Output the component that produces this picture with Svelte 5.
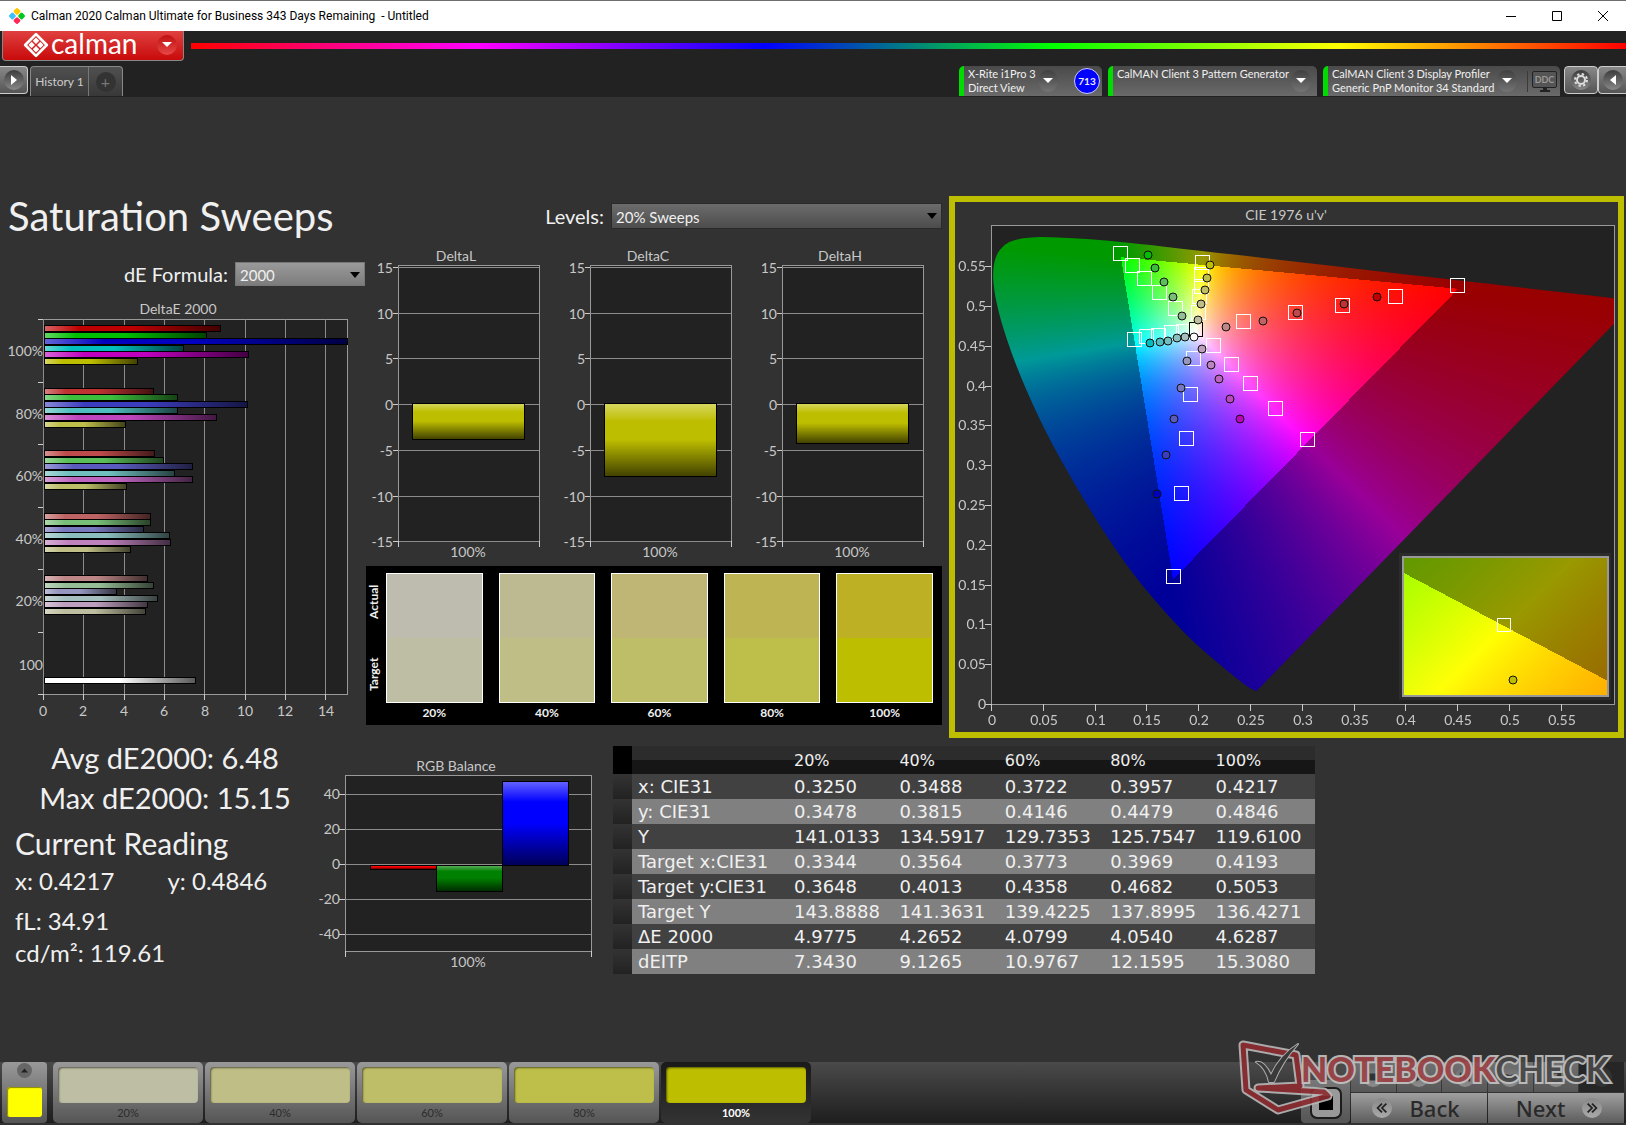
<script>
  import { onMount } from 'svelte';

  let formula = $state('2000');
  let level = $state('20% Sweeps');
  let active = $state(4);
  let gamutEl = $state(null);
  let insetEl = $state(null);

  const steps = ['20%', '40%', '60%', '80%', '100%'];

  // bar colours per saturation step: R, G, B, C, M, Y
  const groups = [
    { label: '100%', ends: [220, 206, 347, 183, 248, 137], colors: ['#be0000', '#00be00', '#0000be', '#00bebe', '#be00be', '#bebe00'] },
    { label: '80%', ends: [153, 177, 247, 177, 216, 125], colors: ['#be3232', '#3cbe3c', '#3c3cbe', '#50bebe', '#be46be', '#bebe4a'] },
    { label: '60%', ends: [154, 163, 192, 174, 192, 126], colors: ['#be4b4b', '#5abe5a', '#5a5abe', '#70bebe', '#be64be', '#bebe68'] },
    { label: '40%', ends: [150, 150, 143, 169, 170, 130], colors: ['#be6464', '#78be78', '#7878be', '#8cbebe', '#be82be', '#bebe86'] },
    { label: '20%', ends: [147, 153, 116, 157, 147, 145], colors: ['#be8787', '#96be96', '#9696be', '#a5bebe', '#bea0be', '#bebea0'] }
  ];

  const deltas = [
    { name: 'DeltaL', height: 36 },
    { name: 'DeltaC', height: 73 },
    { name: 'DeltaH', height: 40 }
  ];
  const deltaTicks = [15, 10, 5, 0, -5, -10, -15];

  const rgbTicks = [40, 20, 0, -20, -40];
  const rgbBars = [
    { x: 60, y: 119, h: 4, color: '#ff0000' },
    { x: 126, y: 119, h: 26, color: '#008000' },
    { x: 192, y: 35, h: 84, color: '#0000ff' }
  ];

  const patches = [
    { actual: '#bebcae', target: '#bebea4' },
    { actual: '#bdb990', target: '#bfbe86' },
    { actual: '#bfb676', target: '#bebe69' },
    { actual: '#beb454', target: '#bebf4a' },
    { actual: '#bdb025', target: '#bebe00' }
  ];

  const rows = [
    ['x: CIE31', '0.3250', '0.3488', '0.3722', '0.3957', '0.4217'],
    ['y: CIE31', '0.3478', '0.3815', '0.4146', '0.4479', '0.4846'],
    ['Y', '141.0133', '134.5917', '129.7353', '125.7547', '119.6100'],
    ['Target x:CIE31', '0.3344', '0.3564', '0.3773', '0.3969', '0.4193'],
    ['Target y:CIE31', '0.3648', '0.4013', '0.4358', '0.4682', '0.5053'],
    ['Target Y', '143.8888', '141.3631', '139.4225', '137.8995', '136.4271'],
    ['ΔE 2000', '4.9775', '4.2652', '4.0799', '4.0540', '4.6287'],
    ['dEITP', '7.3430', '9.1265', '10.9767', '12.1595', '15.3080']
  ];

  // CIE plot, positions inside the 623 x 479 plot area
  const targets = [
    [252, 97], [304, 88], [351, 81], [404, 72], [466, 61],
    [184, 84], [168, 68], [153, 54], [141, 41], [129, 29],
    [202, 134], [199, 170], [195, 214], [190, 269], [182, 352],
    [192, 107], [180, 108], [167, 111], [155, 112], [143, 115],
    [222, 121], [240, 140], [259, 159], [284, 184], [316, 215],
    [207, 88], [208, 72], [210, 62], [210, 50], [211, 38]
  ];
  const measured = [
    [[235, 103], [272, 97], [306, 89], [353, 80], [386, 73]],
    [[191, 92], [182, 73], [173, 58], [164, 44], [157, 31]],
    [[196, 137], [190, 164], [183, 195], [175, 231], [166, 270]],
    [[194, 113], [186, 114], [177, 117], [169, 118], [159, 119]],
    [[211, 125], [220, 141], [228, 155], [239, 175], [249, 195]],
    [[207, 96], [210, 80], [214, 66], [216, 54], [219, 41]]
  ];
  const uTicks = ['0', '0.05', '0.1', '0.15', '0.2', '0.25', '0.3', '0.35', '0.4', '0.45', '0.5', '0.55'];

  const locus = [
    [0.1741, 0.005], [0.1714, 0.0051], [0.1644, 0.0109], [0.1566, 0.0177], [0.144, 0.0297],
    [0.1241, 0.0578], [0.1096, 0.0868], [0.0913, 0.1327], [0.0687, 0.2007], [0.0454, 0.295],
    [0.0235, 0.4127], [0.0082, 0.5384], [0.0039, 0.6548], [0.0139, 0.7502], [0.0389, 0.812],
    [0.0743, 0.8338], [0.1142, 0.8262], [0.1547, 0.8059], [0.2296, 0.7543], [0.3016, 0.6923],
    [0.3731, 0.6245], [0.4441, 0.5547], [0.5125, 0.4866], [0.5752, 0.4242], [0.627, 0.3725],
    [0.6658, 0.334], [0.6915, 0.3083], [0.719, 0.2809], [0.7347, 0.2653]
  ];

  // linear sRGB mix, dimmed outside of the gamut triangle
  function uvColor(u, v) {
    const X = (9 * u) / (4 * v);
    const Z = (12 - 3 * u - 20 * v) / (4 * v);
    const rgb = [
      3.2406 * X - 1.5372 - 0.4986 * Z,
      -0.9689 * X + 1.8758 + 0.0415 * Z,
      0.0557 * X - 0.204 + 1.057 * Z
    ];
    const max = Math.max(...rgb);
    const scale = Math.min(...rgb) < 0 ? 153 : 255;
    return rgb.map((c) => (scale * Math.max(0, c)) / max);
  }

  function shade(canvas, toUv) {
    const { width, height } = canvas;
    const image = new ImageData(width, height);
    for (let y = 0; y < height; y++) {
      for (let x = 0; x < width; x++) {
        const [r, g, b] = uvColor(...toUv(x, y));
        image.data.set([r, g, b, 255], (y * width + x) * 4);
      }
    }
    canvas.getContext('2d').putImageData(image, 0, 0);
  }

  onMount(() => {
    const full = document.createElement('canvas');
    full.width = gamutEl.width;
    full.height = gamutEl.height;
    shade(full, (x, y) => [x / 1035, (479.5 - y) / 796]);

    const pts = locus.map(([x, y]) => {
      const d = -2 * x + 12 * y + 3;
      return [((4 * x) / d) * 1035, 479 - ((9 * y) / d) * 796];
    });
    const ctx = gamutEl.getContext('2d');
    ctx.beginPath();
    ctx.moveTo(...pts[0]);
    for (let i = 1; i < pts.length - 1; i++) {
      const [x, y] = pts[i];
      const [nx, ny] = pts[i + 1];
      ctx.quadraticCurveTo(x, y, (x + nx) / 2, (y + ny) / 2);
    }
    ctx.lineTo(...pts[pts.length - 1]);
    ctx.closePath();
    ctx.clip();
    ctx.drawImage(full, 0, 0);

    // close-up around the yellow target
    shade(insetEl, (x, y) => [0.2039 + (x - 102 + y - 70) / 7000, 0.5529 - (y - 70) / 20000 - (x - 102) / 1e7]);
  });
</script>

<div class="window">
  <div class="titlebar">
    <svg class="app-icon" viewBox="0 0 16 16" aria-hidden="true">
      <rect x="5.2" y="0.6" width="5.6" height="5.6" rx="1.500" fill="#ffc800" transform="rotate(45 8 3.4)" />
      <rect x="0.6" y="5.2" width="5.6" height="5.6" rx="1.500" fill="#3cc0ff" transform="rotate(45 3.4 8)" />
      <rect x="9.8" y="5.2" width="5.6" height="5.6" rx="1.500" fill="#00c81e" transform="rotate(45 12.6 8)" />
      <rect x="5.2" y="9.8" width="5.6" height="5.6" rx="1.500" fill="#ff285a" transform="rotate(45 8 12.6)" />
    </svg>
    <span class="caption">Calman 2020 Calman Ultimate for Business 343 Days Remaining&nbsp; - Untitled</span>
    <button class="win-btn" aria-label="Minimize"><svg viewBox="0 0 12 12"><path d="M1 6.5h10" /></svg></button>
    <button class="win-btn" aria-label="Maximize"><svg viewBox="0 0 12 12"><path d="M1.500 1.500h9v9h-9z" /></svg></button>
    <button class="win-btn" aria-label="Close"><svg viewBox="0 0 12 12"><path d="M1 1l10 10M11 1L1 11" /></svg></button>
  </div>

  <header>
    <div class="brand-row">
      <button class="brand">
        <svg viewBox="0 0 24 24" aria-hidden="true">
          <path d="M12 2L22 12L12 22L2 12Z" fill="none" stroke="#fff" stroke-width="2.500" stroke-linejoin="round" />
          <path d="M12 5l3 3-3 3-3-3zM8 9l3 3-3 3-3-3zM16 9l3 3-3 3-3-3zM12 13l3 3-3 3-3-3z" fill="#fff" />
        </svg>
        <span>calman</span>
        <i class="round red"><svg viewBox="0 0 10 6"><path d="M0 0h10l-5 5z" /></svg></i>
      </button>
      <div class="spectrum"></div>
    </div>
    <div class="tool-row">
      <button class="square left" aria-label="Expand"><i class="round"><svg class="side" viewBox="0 0 6 10"><path d="M0 0v10l6-5z" /></svg></i></button>
      <div class="tabs">
        <button class="tab">History 1</button>
        <button class="tab add" aria-label="Add"><i class="round dim">+</i></button>
      </div>
      <div class="spacer"></div>
      <div class="device meter">
        <span>X-Rite i1Pro 3<br />Direct View</span>
        <button class="round oval" aria-label="Meter menu"><svg viewBox="0 0 10 6"><path d="M0 0h10l-5 5z" /></svg></button>
        <b class="badge">713</b>
      </div>
      <div class="device source">
        <span>CalMAN Client 3 Pattern Generator</span>
        <button class="round oval" aria-label="Source menu"><svg viewBox="0 0 10 6"><path d="M0 0h10l-5 5z" /></svg></button>
      </div>
      <div class="device display">
        <span>CalMAN Client 3 Display Profiler<br />Generic PnP Monitor 34 Standard</span>
        <button class="round oval" aria-label="Display menu"><svg viewBox="0 0 10 6"><path d="M0 0h10l-5 5z" /></svg></button>
        <div class="ddc">
          <b>DDC</b>
          <svg viewBox="0 0 12 4" aria-hidden="true"><path d="M4 0h4v2h3v2H1V2h3z" /></svg>
        </div>
      </div>
      <button class="square gear" aria-label="Settings">
        <i class="round">
          <svg class="cog" viewBox="0 0 16 16">
            <circle cx="8" cy="8" r="4" fill="none" stroke="#ddd" stroke-width="2" />
            <circle cx="8" cy="8" r="6" fill="none" stroke="#ddd" stroke-width="2" stroke-dasharray="2.360 2.350" />
          </svg>
        </i>
      </button>
      <button class="square right" aria-label="Collapse"><i class="round"><svg class="side" viewBox="0 0 6 10"><path d="M6 0v10L0 5z" /></svg></i></button>
    </div>
  </header>

  <main>
    <section class="top">
      <div class="col">
        <h1>Saturation Sweeps</h1>
        <div class="field formula">
          <label for="formula">dE Formula:</label>
          <span class="select light">
            <select id="formula" bind:value={formula}><option>2000</option><option>1994</option></select>
          </span>
        </div>
        <svg class="chart de" viewBox="0 0 365 430">
          <defs>
            <linearGradient id="glossX">
              <stop offset="0" stop-color="#fff" stop-opacity="0.4" />
              <stop offset="0.2" stop-color="#fff" stop-opacity="0" />
              <stop offset="0.5" stop-color="#000" stop-opacity="0" />
              <stop offset="1" stop-color="#000" stop-opacity="0.65" />
            </linearGradient>
            <linearGradient id="glossY" x2="0" y2="1">
              <stop offset="0" stop-color="#fff" stop-opacity="0.4" />
              <stop offset="0.25" stop-color="#fff" stop-opacity="0" />
              <stop offset="0.5" stop-color="#000" stop-opacity="0" />
              <stop offset="1" stop-color="#000" stop-opacity="0.65" />
            </linearGradient>
          </defs>
          <text x="178" y="16" class="mid">DeltaE 2000</text>
          <rect x="43" y="21" width="304" height="375" class="plot" />
          {#each [0, 2, 4, 6, 8, 10, 12, 14] as t, i}
            <path d="M{43 + Math.round(i * 40.3)} 21v375" class="grid" />
            <path d="M{43 + Math.round(i * 40.3)} 396v6" class="tick" />
            <text x={43 + Math.round(i * 40.4)} y="418" class="mid">{t}</text>
          {/each}
          {#each [21, 84, 146, 209, 271, 334, 396] as y}
            <path d="M38 {y}h5" class="tick" />
          {/each}
          {#each groups as g, gi}
            <text x="43" y={58 + Math.round(gi * 62.5)} class="end">{g.label}</text>
            {#each g.ends as end, i}
              {@const y = 27 + Math.round(gi * 62.5 + i * 6.6)}
              <rect x="44" {y} width={end - 44} height="6" fill={g.colors[i]} />
              <rect x="44" {y} width={end - 44} height="6" class="bar" fill="url(#glossX)" />
            {/each}
          {/each}
          <text x="43" y="372" class="end">100</text>
          <rect x="44" y="379" width="151" height="6" fill="#fff" />
          <rect x="44" y="379" width="151" height="6" class="bar" fill="url(#glossX)" />
        </svg>
      </div>

      <div class="col">
        <div class="field levels">
          <label for="levels">Levels:</label>
          <span class="select">
            <select id="levels" bind:value={level}><option>20% Sweeps</option><option>25% Sweeps</option></select>
          </span>
        </div>
        <div class="deltas">
          {#each deltas as d}
            <svg class="chart" viewBox="0 0 192 320">
              <text x="90" y="21" class="mid">{d.name}</text>
              <rect x="32" y="25" width="141" height="276" class="plot" />
              {#each deltaTicks as t, i}
                <path d="M32 {27 + Math.round(i * 45.7)}h141" class="grid" />
                <path d="M27 {27 + Math.round(i * 45.7)}h5" class="tick" />
                <text x="27" y={33 + Math.round(i * 45.7)} class="end">{t}</text>
              {/each}
              <path d="M32 301v6M173 301v6" class="tick" />
              <rect x="46" y="163" width="112" height={d.height} fill="#bebe00" />
              <rect x="46" y="163" width="112" height={d.height} class="bar" fill="url(#glossY)" />
              <text x="102" y="317" class="mid">100%</text>
            </svg>
          {/each}
        </div>
        <div class="patches">
          <div class="side-labels"><span>Target</span><span>Actual</span></div>
          {#each patches as p, i}
            <figure>
              <div class="patch">
                <div style="background: {p.actual}"></div>
                <div style="background: {p.target}"></div>
              </div>
              <figcaption>{steps[i]}</figcaption>
            </figure>
          {/each}
        </div>
      </div>

      <div class="cie">
        <svg class="chart" viewBox="0 1 663 530">
          <text x="331" y="19" class="mid">CIE 1976 u'v'</text>
          <rect x="36" y="24" width="623" height="479" class="plot" />
          <foreignObject x="36" y="24" width="623" height="479">
            <canvas bind:this={gamutEl} width="623" height="479"></canvas>
          </foreignObject>
          <rect x="36" y="24" width="623" height="479" class="frame" />
          {#each uTicks as t, i}
            <path d="M{36 + Math.round(i * 51.8)} 503v7" class="tick" />
            <text x={37 + Math.round(i * 51.8)} y="524" class="mid">{t}</text>
            <path d="M30 {503 - Math.round(i * 39.8)}h6" class="tick" />
            <text x="31" y={508 - Math.round(i * 39.8)} class="end">{t}</text>
          {/each}
          <g transform="translate(36 23)">
            {#each targets as [x, y]}
              <rect x={x - 7} y={y - 7} width="14" height="14" class="target" />
            {/each}
            <rect x="198" y="98" width="13" height="14" class="target white-point" />
            {#each measured as series, s}
              {#each series as [x, y], i}
                <circle cx={x} cy={y} r="4" fill={groups[4 - i].colors[s]} class="reading" />
              {/each}
            {/each}
            <circle cx="203" cy="113" r="4" fill="#fff" class="reading" />
          </g>
          <rect x="444" y="352" width="212" height="147" fill="#2c2c2c" />
          <foreignObject x="447" y="355" width="206" height="140">
            <canvas bind:this={insetEl} width="206" height="140"></canvas>
          </foreignObject>
          <rect x="448" y="356" width="205" height="139" class="frame inset" />
          <rect x="542" y="417" width="13" height="13" class="target" />
          <circle cx="558" cy="479" r="4" fill="#bebe00" class="reading" />
        </svg>
      </div>
    </section>

    <section class="bottom">
      <div class="readings">
        <p class="big center">Avg dE2000: 6.48</p>
        <p class="big center">Max dE2000: 15.15</p>
        <h2>Current Reading</h2>
        <p class="pair"><span>x: 0.4217</span><span>y: 0.4846</span></p>
        <p>fL: 34.91</p>
        <p>cd/m²: 119.61</p>
      </div>

      <svg class="chart rgb" viewBox="0 0 303 226">
        <text x="146" y="25" class="mid">RGB Balance</text>
        <rect x="35" y="29" width="246" height="176" class="plot" />
        {#each rgbTicks as t, i}
          <path d="M35 {48 + i * 35}h246" class="grid" />
          <path d="M29 {48 + i * 35}h6" class="tick" />
          <text x="30" y={53 + i * 35} class="end">{t}</text>
        {/each}
        <path d="M35 205v6M281 205v6" class="tick" />
        {#each rgbBars as b}
          <rect x={b.x} y={b.y} width="66" height={b.h} fill={b.color} />
          <rect x={b.x} y={b.y} width="66" height={b.h} class="bar" fill="url(#glossY)" />
        {/each}
        <text x="158" y="221" class="mid">100%</text>
      </svg>

      <table>
        <thead>
          <tr>
            <th class="handle"></th>
            <th class="name"></th>
            {#each steps as s}<th>{s}</th>{/each}
          </tr>
        </thead>
        <tbody>
          {#each rows as row}
            <tr>
              <td class="handle"></td>
              {#each row as cell}<td>{cell}</td>{/each}
            </tr>
          {/each}
        </tbody>
      </table>
    </section>
  </main>

  <footer>
    <button class="picker" aria-label="Pattern">
      <i class="round up"><svg viewBox="0 0 10 6"><path d="M0 6h10l-5-6z" /></svg></i>
      <span></span>
    </button>
    <div class="levels-bar">
      {#each steps as s, i}
        <button class="level" class:active={i === active} onclick={() => (active = i)}>
          <span style="background: {patches[i].target}"></span>{s}
        </button>
      {/each}
    </div>
    <div class="spacer"></div>
    <button class="stop" aria-label="Stop"><span></span></button>
    <div class="controls">
      <div class="transport">
        <button aria-label="Stop reading"><i class="disc"><svg viewBox="0 0 16 16"><path d="M4 4h8v8H4z" /></svg></i></button>
        <button aria-label="Play"><i class="disc"><svg viewBox="0 0 16 16"><path d="M5 3l8 5-8 5z" /></svg></i></button>
        <button aria-label="Step"><i class="disc"><svg viewBox="0 0 16 16"><path d="M2 3h2v10H2zM12 3h2v10h-2zM5 4l5 4-5 4z" /></svg></i></button>
        <button aria-label="Continuous"><i class="disc"><svg viewBox="0 0 16 16"><path d="M8 8c-2-3-6-3-6 0s4 3 6 0 6-3 6 0-4 3-6 0z" fill="none" stroke="#333" stroke-width="2" /></svg></i></button>
        <button aria-label="Refresh"><i class="disc"><svg viewBox="0 0 16 16"><path d="M12 5a5 5 0 1 0 1 4M13 2v4H9" fill="none" stroke="#333" stroke-width="2" /></svg></i></button>
        <button class="off" aria-label="Record"><i class="disc"></i></button>
      </div>
      <div class="nav">
        <button><i class="disc"><svg viewBox="0 0 16 16"><path d="M8 3L3 8l5 5M13 3L8 8l5 5" /></svg></i><span>Back</span></button>
        <button><span>Next</span><i class="disc"><svg viewBox="0 0 16 16"><path d="M3 3l5 5-5 5M8 3l5 5-5 5" /></svg></i></button>
      </div>
    </div>
    <svg class="watermark" viewBox="0 0 388 80" aria-hidden="true">
      <g fill="none" stroke-linejoin="round" stroke-linecap="round">
        <path d="M7 9L60 19L64 50L22 52L88 56L92 60L42 74L10 54Z" stroke="#b9b9b9" stroke-width="9" />
        <path d="M7 9L60 19L64 50L22 52L88 56L92 60L42 74L10 54Z" stroke="#8e2c30" stroke-width="5" />
        <path d="M20 26q8-2 15 13Q44 19 62 8Q46 26 38 46h-5Q30 32 20 26z" fill="#3a3a3a" stroke="#b9b9b9" stroke-width="2" />
      </g>
      <text x="65" y="46"><tspan class="note">NOTEBOOK</tspan><tspan class="check">CHECK</tspan></text>
    </svg>
  </footer>
</div>

<style>
  :global(body) { margin: 0; background: #323232; }
  .window {
    display: flex;
    flex-direction: column;
    min-height: 100vh;
    box-sizing: border-box;
    border-top: 1px solid #6e6e6e;
    padding-bottom: 2px;
    background: #323232;
    color: #f0f0f0;
    font-family: Lato, "Liberation Sans", sans-serif;
  }
  button { border: 0; padding: 0; font: inherit; color: inherit; background: none; cursor: pointer; }
  h1, h2, p, figure { margin: 0; font-weight: 400; }
  .spacer { flex: 1; }

  .titlebar { display: flex; align-items: center; height: 30px; background: #fff; color: #000; font: 12px/30px Roboto, sans-serif; }
  .app-icon { width: 16px; height: 16px; margin: 0 6px 0 9px; }
  .caption { flex: 1; white-space: pre; }
  .win-btn { width: 46px; height: 30px; display: flex; align-items: center; justify-content: center; }
  .win-btn svg { width: 12px; height: 12px; fill: none; stroke: #000; stroke-width: 1; }

  header { height: 66px; background: #222; display: flex; flex-direction: column; }
  .brand-row { display: flex; height: 30px; }
  .brand {
    width: 182px;
    margin-left: 2px;
    box-sizing: border-box;
    display: flex;
    align-items: flex-start;
    padding: 0 6px 0 20px;
    background: linear-gradient(#e04040, #c80a0a);
    border: 1px solid #888;
    border-top: 0;
    border-radius: 0 0 4px 4px;
    color: #fff;
  }
  .brand > svg { width: 26px; height: 26px; margin: 1px 2px 0 0; }
  .brand span { flex: 1; text-align: left; font-size: 28px; line-height: 24px; }
  .brand .round { margin-top: 4px; }
  .spectrum {
    flex: 1;
    height: 6px;
    margin: 12px 0 0 7px;
    background: linear-gradient(90deg, #f00, #f0f 20%, #00f 40%, #0f0 60%, #ff0 80%, #f00);
  }
  .round {
    display: flex;
    align-items: center;
    justify-content: center;
    flex: none;
    width: 20px;
    height: 20px;
    border-radius: 50%;
    background: linear-gradient(#3c3c3c, #888);
    font-style: normal;
  }
  .round svg { width: 10px; height: 6px; fill: #fff; }
  .round .side { width: 6px; height: 10px; }
  .round .cog { width: 16px; height: 16px; }
  .red { background: linear-gradient(#c01010, #e64848); }
  .dim { background: #333; color: #777; font-size: 16px; }
  .oval { height: 22px; background: linear-gradient(#404040, #747474); }

  .tool-row { display: flex; height: 31px; margin-top: 5px; align-items: flex-start; }
  .square {
    display: flex;
    align-items: center;
    justify-content: center;
    width: 34px;
    height: 28px;
    box-sizing: border-box;
    border: 1px solid #ccc;
    border-radius: 4px;
    background: linear-gradient(#888, #555);
  }
  .square.left { width: 28px; border-left: 0; border-radius: 0 4px 4px 0; margin-right: 2px; }
  .square.gear { margin-left: 4px; }
  .square.right { width: 28px; border-right: 0; border-radius: 4px 0 0 4px; }
  .tabs { display: flex; height: 30px; box-sizing: border-box; border: 1px solid #888; border-bottom: 0; border-radius: 4px 4px 0 0; background: linear-gradient(#505050, #383838); }
  .tab { width: 57px; font-size: 12px; color: #ccc; }
  .tab.add { width: 34px; display: flex; align-items: center; justify-content: center; border-left: 1px solid #777; }
  .device {
    display: flex;
    align-items: center;
    box-sizing: border-box;
    height: 30px;
    margin-right: 6px;
    padding-left: 4px;
    border-left: 5px solid #00dc00;
    border-radius: 5px 5px 0 0;
    background: linear-gradient(#4a4a4a, #6a6a6a);
    font-size: 11px;
    line-height: 14px;
    white-space: nowrap;
  }
  .device span { flex: 1; align-self: flex-start; padding-top: 1px; }
  .meter { width: 143px; }
  .source { width: 209px; padding-right: 6px; }
  .display { width: 237px; margin-right: 0; }
  .badge {
    width: 24px;
    height: 24px;
    margin: 0 2px 0 16px;
    border: 1px solid #ccf;
    border-radius: 50%;
    background: #00f;
    font-size: 10px;
    line-height: 24px;
    text-align: center;
  }
  .ddc { display: flex; flex-direction: column; align-items: center; margin-left: 10px; padding: 0 3px 0 4px; border-left: 1px solid #3a3a3a; }
  .ddc b {
    width: 23px;
    height: 15px;
    border: 1px solid #222;
    border-radius: 2px;
    background: #555;
    color: #999;
    font-size: 9px;
    line-height: 15px;
    text-align: center;
  }
  .ddc svg { width: 12px; height: 4px; fill: #222; }

  main { flex: 1; padding: 98px 2px 0 0; }
  .top { display: grid; grid-template-columns: minmax(0, 365fr) minmax(0, 576fr) minmax(0, 681fr); gap: 1px; }
  .chart { display: block; width: 100%; height: auto; font-size: 14px; fill: #c8c8c8; }
  .mid { text-anchor: middle; }
  .end { text-anchor: end; }
  .plot, .frame, .grid, .tick, .bar, .target { shape-rendering: crispEdges; stroke-width: 1; }
  .plot { fill: #222; stroke: #999; }
  .frame { fill: none; stroke: #999; }
  .inset { stroke-width: 2; }
  .grid { stroke: #8c8c8c; }
  .tick { stroke: #ccc; }
  .bar { stroke: #000; }
  .target { fill: none; stroke: #fff; }
  .white-point { stroke: #000; }
  .reading { stroke: #111; stroke-width: 1; }
  canvas { display: block; }

  h1 { padding-left: 8px; font-size: 40px; line-height: 42px; }
  .field { display: flex; align-items: center; justify-content: flex-end; }
  .field label { font-size: 20px; line-height: 24px; margin-right: 7px; }
  .formula { margin-top: 25px; height: 24px; }
  .levels { margin-top: 8px; height: 26px; }
  .select { position: relative; width: 331px; height: 26px; }
  .select.light { width: 130px; height: 24px; }
  .select::after {
    content: "";
    position: absolute;
    right: 5px;
    top: 10px;
    border: 5px solid transparent;
    border-top: 6px solid #000;
    border-bottom: 0;
    pointer-events: none;
  }
  select {
    appearance: none;
    width: 100%;
    height: 100%;
    padding: 2px 4px 0;
    border: 1px solid #2a2a2a;
    border-radius: 0;
    background: linear-gradient(#6c6c6c, #4c4c4c);
    color: #f0f0f0;
    font: 15px Lato, sans-serif;
  }
  .light select { background: linear-gradient(#9a9a9a, #7c7c7c); border-color: #777; }
  .de { margin-top: 12px; }
  .deltas { display: grid; grid-template-columns: repeat(3, 1fr); margin-top: 11px; }

  .patches { display: flex; gap: 16px; height: 159px; margin-top: 6px; padding: 7px 9px 0 0; box-sizing: border-box; background: #000; }
  .side-labels { display: flex; gap: 14px; writing-mode: vertical-rl; transform: rotate(180deg); width: 16px; height: 130px; margin: 0 -12px 0 0; font-size: 12px; line-height: 16px; font-weight: 700; }
  .side-labels span { flex: 1; text-align: center; }
  .patches figure { flex: 1; }
  .patch { display: flex; flex-direction: column; height: 130px; box-sizing: border-box; border: 1px solid #fff; }
  .patch div { flex: 1; }
  figcaption { font-size: 12px; line-height: 20px; font-weight: 700; text-align: center; }
  .cie { margin: 1px 0 0 6px; border: 6px solid #bebe00; align-self: start; }

  .bottom { display: grid; grid-template-columns: minmax(0, 310fr) minmax(0, 303fr) minmax(0, 702fr) minmax(0, 309fr); align-items: start; }
  .readings { padding-left: 15px; font-size: 24px; line-height: 32px; }
  .big { font-size: 29px; line-height: 40px; }
  .center { padding-left: 5px; text-align: center; }
  h2 { margin: 5px 0 2px; font-size: 30px; line-height: 40px; }
  .pair { display: flex; margin-bottom: 8px; }
  .pair span { width: 50%; flex: none; }
  .pair span + span { padding-left: 5px; }
  .rgb { margin-top: 8px; }

  table { margin-top: 8px; width: 100%; table-layout: fixed; border-collapse: collapse; font: 18px/25px "DejaVu Sans", sans-serif; text-align: left; color: #f0f0f0; }
  th { height: 28px; padding: 0 0 0 6px; font-weight: 400; font-size: 16px; background: linear-gradient(#2c2c2c 50%, #161616 50%); }
  td { height: 25px; padding: 0 0 0 6px; white-space: nowrap; }
  th.name { width: 150px; }
  th.handle { width: 13px; background: #000; }
  td.handle { background: linear-gradient(#333, #222); }
  tbody tr { background: #414141; }
  tbody tr:nth-child(even) { background: #808080; }

  footer { position: relative; display: flex; height: 61px; padding: 0 2px; background: linear-gradient(#4a4a4a, #1e1e1e); }
  .picker { width: 45px; margin-right: 6px; border-radius: 4px; background: linear-gradient(#999, #555); display: flex; flex-direction: column; align-items: center; gap: 9px; }
  .picker .up { width: 15px; height: 15px; margin-top: 1px; background: #666; }
  .picker .up svg { width: 7px; height: 5px; fill: #222; }
  .picker span { width: 35px; height: 30px; border-radius: 3px; background: #ff0; box-shadow: inset 1px 1px 1px #880; }
  .levels-bar { display: flex; gap: 2px; }
  .level {
    width: 150px;
    padding: 5px;
    border-radius: 5px;
    background: linear-gradient(#999, #555);
    color: #2c2c2c;
    font-size: 11px;
    line-height: 20px;
  }
  .level span { display: block; height: 36px; border-radius: 4px; box-shadow: inset 1px 1px 2px #0008; }
  .level.active { background: linear-gradient(#1a1a1a, #333); color: #fff; font-weight: 700; }
  .stop { width: 49px; margin-right: 1px; border-radius: 4px; background: linear-gradient(#4a4a4a 30%, #777 30%, #555); display: flex; align-items: flex-end; justify-content: center; }
  .stop span { width: 14px; height: 14px; margin-bottom: 6px; border: 7px solid #999; border-radius: 5px; outline: 2px solid #1c1c1c; background: #000; }
  .controls { width: 273px; display: flex; flex-direction: column; gap: 1px; }
  .transport, .nav { display: flex; gap: 1px; height: 30px; }
  .transport button, .nav button { flex: 1; display: flex; align-items: center; justify-content: center; background: linear-gradient(#707070, #585858); }
  .transport .off { background: #262626; }
  .nav button { gap: 17px; padding-right: 6px; background: linear-gradient(#a0a0a0, #5c5c5c); color: #2a2a2a; font: 500 22px/30px "Noto Sans", sans-serif; }
  .nav button + button { padding: 0 0 0 6px; }
  .disc { display: flex; align-items: center; justify-content: center; width: 20px; height: 20px; border-radius: 50%; background: linear-gradient(#6c6c6c, #8c8c8c); font-style: normal; }
  .disc svg { width: 14px; height: 14px; fill: #333; }
  .nav .disc { background: linear-gradient(#888, #aaa); }
  .nav .disc svg { fill: none; stroke: #222; stroke-width: 2; }
  .off .disc { background: #333; }
  .watermark { position: absolute; right: 2px; bottom: 7px; width: 388px; height: 80px; opacity: 0.9; pointer-events: none; font: 900 34px Lato, sans-serif; paint-order: stroke; stroke: #c4c4c4; stroke-width: 4px; }
  .note { fill: #a04448; }
  .check { fill: #484848; font-weight: 700; }
</style>
